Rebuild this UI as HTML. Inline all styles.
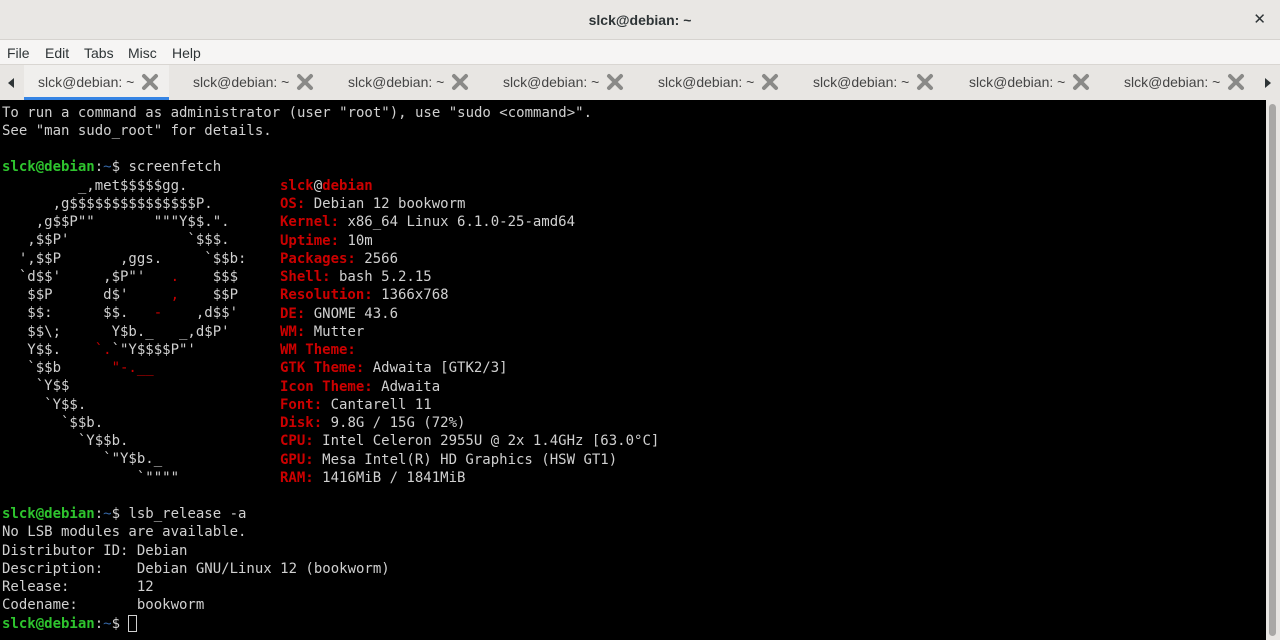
<!DOCTYPE html>
<html><head><meta charset="utf-8"><style>
*{margin:0;padding:0;box-sizing:border-box}
body{width:1280px;height:640px;overflow:hidden;background:#e8e6e3;font-family:"Liberation Sans","DejaVu Sans",sans-serif;position:relative}
#title{position:absolute;left:0;top:0;width:1280px;height:40px;background:#e9e7e4;border-bottom:1px solid #d6d3cf;text-align:center;line-height:40px;font-size:14px;font-weight:bold;color:#2e3436}
#close{position:absolute;right:14px;top:0;font-weight:bold;font-size:15px;color:#2e3436}
#menu{position:absolute;top:40px;left:0;width:1280px;height:25px;background:#f6f5f4;border-bottom:1px solid #d9d6d2;font-size:14px;color:#2e3436}
#menu span{position:absolute;top:5px}
#tabs{position:absolute;top:65px;left:0;width:1280px;height:35px;background:#e8e6e3}
.tab{position:absolute;top:0;height:35px;width:145px;font-size:14px;color:#454545;line-height:34px}
.tab .l{position:absolute;left:14px;top:0}
.tab svg{position:absolute;left:117px;top:8px}
.active{background:#f0efed;border-bottom:3px solid #3584e4}
#term{position:absolute;top:100px;left:0;width:1266px;height:540px;background:#000}
#sb{position:absolute;top:100px;left:1266px;width:14px;height:540px;background:#e8e6e3}
#sb div{position:absolute;left:3px;top:4px;width:7px;height:532px;border-radius:4px;background:#a9a8a6}
pre{position:absolute;font-family:"DejaVu Sans Mono","Liberation Mono",monospace;font-size:14px;line-height:18.25px;color:#d0d0d0;white-space:pre}
.g{color:#2ec42e;font-weight:bold}.b{color:#3465a4}.r{color:#cc0000}.rb{color:#cc0000;font-weight:bold}
.cur{display:inline-block;width:9px;height:17px;border:1px solid #d0d0d0;vertical-align:-4px}
</style></head><body>
<div id="title">slck@debian: ~<span id="close">✕</span></div>
<div id="menu"><span style="left:7px">File</span><span style="left:45px">Edit</span><span style="left:84px">Tabs</span><span style="left:128px">Misc</span><span style="left:172px">Help</span></div>
<div id="tabs">
<div style="position:absolute;left:8px;top:13px;width:0;height:0;border-top:5px solid transparent;border-bottom:5px solid transparent;border-right:6px solid #2e3436"></div>
<div style="position:absolute;left:1265px;top:13px;width:0;height:0;border-top:5px solid transparent;border-bottom:5px solid transparent;border-left:6px solid #2e3436"></div>
<div class="tab active" style="left:24px"><span class="l">slck@debian: ~</span><svg width="18" height="18" viewBox="0 0 18 18"><path d="M3 3L15 15M15 3L3 15" stroke="#8a8a88" stroke-width="4" stroke-linecap="round"/></svg></div>
<div class="tab" style="left:179px"><span class="l">slck@debian: ~</span><svg width="18" height="18" viewBox="0 0 18 18"><path d="M3 3L15 15M15 3L3 15" stroke="#8a8a88" stroke-width="4" stroke-linecap="round"/></svg></div>
<div class="tab" style="left:334px"><span class="l">slck@debian: ~</span><svg width="18" height="18" viewBox="0 0 18 18"><path d="M3 3L15 15M15 3L3 15" stroke="#8a8a88" stroke-width="4" stroke-linecap="round"/></svg></div>
<div class="tab" style="left:489px"><span class="l">slck@debian: ~</span><svg width="18" height="18" viewBox="0 0 18 18"><path d="M3 3L15 15M15 3L3 15" stroke="#8a8a88" stroke-width="4" stroke-linecap="round"/></svg></div>
<div class="tab" style="left:644px"><span class="l">slck@debian: ~</span><svg width="18" height="18" viewBox="0 0 18 18"><path d="M3 3L15 15M15 3L3 15" stroke="#8a8a88" stroke-width="4" stroke-linecap="round"/></svg></div>
<div class="tab" style="left:799px"><span class="l">slck@debian: ~</span><svg width="18" height="18" viewBox="0 0 18 18"><path d="M3 3L15 15M15 3L3 15" stroke="#8a8a88" stroke-width="4" stroke-linecap="round"/></svg></div>
<div class="tab" style="left:955px"><span class="l">slck@debian: ~</span><svg width="18" height="18" viewBox="0 0 18 18"><path d="M3 3L15 15M15 3L3 15" stroke="#8a8a88" stroke-width="4" stroke-linecap="round"/></svg></div>
<div class="tab" style="left:1110px"><span class="l">slck@debian: ~</span><svg width="18" height="18" viewBox="0 0 18 18"><path d="M3 3L15 15M15 3L3 15" stroke="#8a8a88" stroke-width="4" stroke-linecap="round"/></svg></div>
</div>
<div id="term"></div>
<div id="sb"><div></div></div>
<pre style="left:2px;top:103.5px">To run a command as administrator (user "root"), use "sudo &lt;command&gt;".
See "man sudo_root" for details.

<span class="g">slck@debian</span>:<span class="b">~</span>$ screenfetch
         _,met$$$$$gg.
      ,g$$$$$$$$$$$$$$$P.
    ,g$$P""       """Y$$.".
   ,$$P'              `$$$.
  ',$$P       ,ggs.     `$$b:
  `d$$'     ,$P"'   <span class="r">.</span>    $$$
   $$P      d$'     <span class="r">,</span>    $$P
   $$:      $$.   <span class="r">-</span>    ,d$$'
   $$\;      Y$b._   _,d$P'
   Y$$.    <span class="r">`.</span>`"Y$$$$P"'
   `$$b      <span class="r">"-.__</span>
    `Y$$
     `Y$$.
       `$$b.
         `Y$$b.
            `"Y$b._
                `""""

<span class="g">slck@debian</span>:<span class="b">~</span>$ lsb_release -a
No LSB modules are available.
Distributor ID:	Debian
Description:	Debian GNU/Linux 12 (bookworm)
Release:	12
Codename:	bookworm
<span class="g">slck@debian</span>:<span class="b">~</span>$ <span class="cur"></span></pre>
<pre style="left:280px;top:176.75px"><span class="rb">slck</span>@<span class="rb">debian</span>
<span class="rb">OS:</span> Debian 12 bookworm
<span class="rb">Kernel:</span> x86_64 Linux 6.1.0-25-amd64
<span class="rb">Uptime:</span> 10m
<span class="rb">Packages:</span> 2566
<span class="rb">Shell:</span> bash 5.2.15
<span class="rb">Resolution:</span> 1366x768
<span class="rb">DE:</span> GNOME 43.6
<span class="rb">WM:</span> Mutter
<span class="rb">WM Theme:</span>
<span class="rb">GTK Theme:</span> Adwaita [GTK2/3]
<span class="rb">Icon Theme:</span> Adwaita
<span class="rb">Font:</span> Cantarell 11
<span class="rb">Disk:</span> 9.8G / 15G (72%)
<span class="rb">CPU:</span> Intel Celeron 2955U @ 2x 1.4GHz [63.0°C]
<span class="rb">GPU:</span> Mesa Intel(R) HD Graphics (HSW GT1)
<span class="rb">RAM:</span> 1416MiB / 1841MiB</pre>
</body></html>
